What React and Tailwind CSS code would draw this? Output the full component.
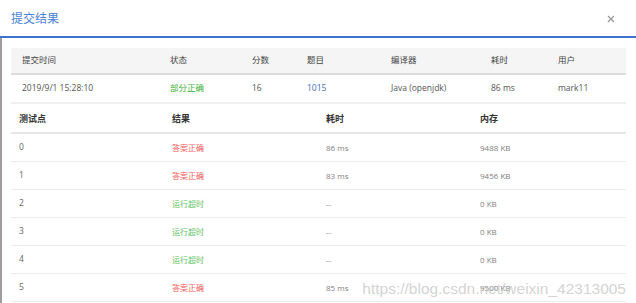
import React from "react";

const top = {
  time: "2019/9/1 15:28:10",
  status: "部分正确",
  score: "16",
  problem: "1015",
  compiler: "Java (openjdk)",
  cost: "86 ms",
  user: "mark11",
};

const cases = [
  { id: "0", res: "答案正确", ok: true, t: "86 ms", m: "9488 KB" },
  { id: "1", res: "答案正确", ok: true, t: "83 ms", m: "9456 KB" },
  { id: "2", res: "运行超时", ok: false, t: "--", m: "0 KB" },
  { id: "3", res: "运行超时", ok: false, t: "--", m: "0 KB" },
  { id: "4", res: "运行超时", ok: false, t: "--", m: "0 KB" },
  { id: "5", res: "答案正确", ok: true, t: "85 ms", m: "9500 KB" },
];

export default function App() {
  return (
    <div
      className="relative w-[636px] h-[303px] bg-white overflow-hidden"
      style={{ fontFamily: '"Open Sans", "Noto Sans CJK SC", sans-serif' }}
    >
      <div className="absolute left-0 top-[38px] bottom-0 w-[2px] bg-[#a39c9c]" />
      <div className="flex items-center justify-between h-[38px] pl-[11px] pr-[21px] pt-[2px] border-b-2 border-[#3d72cc]">
        <span className="text-[12px] text-[#4a82d6] leading-none">提交结果</span>
        <svg width="8" height="8" viewBox="0 0 8 8" className="text-[#9a9a9a]">
          <path d="M1 1L7 7M7 1L1 7" stroke="currentColor" strokeWidth="1.3" />
        </svg>
      </div>
      <div className="pl-[11px] pr-[10px] pt-[10px]">
        <div className="grid grid-cols-[159px_82px_55px_84px_100px_67px_1fr] text-[8.5px] leading-none">
          {["提交时间", "状态", "分数", "题目", "编译器", "耗时", "用户"].map((h, i) => (
            <div
              key={h}
              className={`h-[27px] flex items-center bg-[#f5f5f5] border-b-2 border-[#dcdcdc] text-[#444] ${i === 0 ? "pl-[11px]" : ""}`}
            >
              {h}
            </div>
          ))}
          <div className="h-[27px] flex items-center pl-[11px] text-[#555]">{top.time}</div>
          <div className="h-[27px] flex items-center text-[#3cb034]">{top.status}</div>
          <div className="h-[27px] flex items-center text-[#555]">{top.score}</div>
          <div className="h-[27px] flex items-center text-[#3b72b8]">{top.problem}</div>
          <div className="h-[27px] flex items-center text-[#555]">{top.compiler}</div>
          <div className="h-[27px] flex items-center text-[#555]">{top.cost}</div>
          <div className="h-[27px] flex items-center text-[#555]">{top.user}</div>
        </div>
        <div className="border-t-2 border-[#efefef]">
          <div className="grid grid-cols-[153px_154px_154px_1fr] h-[30px] items-center border-b-2 border-[#e6e6e6] text-[9px] font-semibold text-[#333] leading-none">
            <div className="pl-[8px]">测试点</div>
            <div className="pl-[8px]">结果</div>
            <div className="pl-[8px]">耗时</div>
            <div className="pl-[8px]">内存</div>
          </div>
          {cases.map((c) => (
            <div
              key={c.id}
              className="grid grid-cols-[153px_154px_154px_1fr] h-[28px] items-center border-b border-[#ececec] leading-none"
            >
              <div className="pl-[8px] text-[8.5px] text-[#666]">{c.id}</div>
              <div className={`pl-[8px] text-[8px] ${c.ok ? "text-[#f65a5a]" : "text-[#66c266]"}`}>{c.res}</div>
              <div className="pl-[8px] text-[8px] text-[#808080]">{c.t}</div>
              <div className="pl-[8px] text-[8px] text-[#808080]">{c.m}</div>
            </div>
          ))}
        </div>
      </div>
      <div
        className="absolute right-[10px] top-[281px] text-[15.5px] leading-none text-[#c8c8c8]/80 pointer-events-none"
        style={{ fontFamily: '"Liberation Sans", Arial, sans-serif' }}
      >
        https://blog.csdn.net/weixin_42313005
      </div>
    </div>
  );
}
